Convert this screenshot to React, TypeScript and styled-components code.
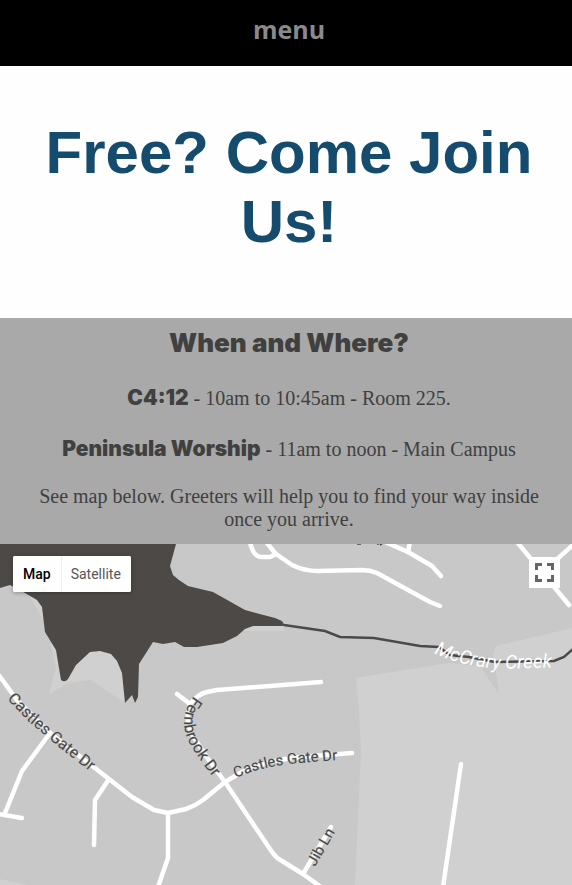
import React from "react";
import styled, { createGlobalStyle } from "styled-components";

const GlobalStyle = createGlobalStyle`
  * { box-sizing: border-box; }
  body { margin: 0; background: #fefefe; }
`;

const Page = styled.main`
  display: flex;
  flex-direction: column;
  text-align: center;
`;

const MenuBar = styled.nav`
  display: flex;
  justify-content: center;
  padding: 11px 0 19px 6px;
  background: #000;
`;

const MenuButton = styled.button`
  border: 0;
  padding: 0;
  background: none;
  color: #8a8a8a;
  font: 700 25px/36px "Open Sans", sans-serif;
  cursor: pointer;
`;

const Hero = styled.header`
  padding: 52px 30px 62px 36px;
  background: #fefefe;
`;

const Title = styled.h1`
  margin: 0;
  color: #154c6e;
  font: bold 60px/69px "Liberation Sans", Arial, sans-serif;
`;

const Info = styled.section`
  display: flex;
  flex-direction: column;
  padding: 8px 24px 13px 30px;
  background: #a9a9a9;
  color: #404040;
  font: 20px/23px "Liberation Serif", "Times New Roman", serif;
`;

const InfoTitle = styled.h2`
  margin: 0 0 24px;
  font: 900 26px/34px "Arial Black", Inter, sans-serif;
`;

const Event = styled.p`
  margin: 0 0 23px;
  line-height: 28px;

  & + & {
    margin-bottom: 22px;
  }
`;

const EventName = styled.strong`
  font: 900 21px/28px "Arial Black", Inter, sans-serif;
`;

const Directions = styled.p`
  margin: 0;
`;

const MapPanel = styled.section`
  position: relative;
  overflow: hidden;
  background: #c8c8c8;
`;

const MapCanvas = styled.svg`
  display: block;
  width: 100%;
  height: auto;
`;

const MapTypes = styled.div`
  position: absolute;
  top: 12px;
  left: 13px;
  display: flex;
  border-radius: 2px;
  overflow: hidden;
  background: #fff;
  box-shadow: 0 1px 4px rgba(0, 0, 0, 0.3);
`;

const MapType = styled.button<{ $active?: boolean }>`
  height: 36px;
  padding: 0 10px;
  border: 0;
  background: #fff;
  color: ${(p) => (p.$active ? "#000" : "#565656")};
  font: ${(p) => (p.$active ? 500 : 400)} 14px/36px Roboto, sans-serif;
  cursor: pointer;

  & + & {
    box-shadow: inset 1px 0 #eee;
  }
`;

const Fullscreen = styled.button`
  position: absolute;
  top: 13px;
  right: 12px;
  display: grid;
  place-items: center;
  width: 31px;
  height: 31px;
  padding: 0;
  border: 0;
  background: #fff;
  cursor: pointer;
`;

const RoadLabel = styled.text<{ $size?: number }>`
  fill: #484848;
  stroke: #c8c8c8;
  stroke-width: 1px;
  paint-order: stroke;
  font: ${(p) => p.$size ?? 15}px Roboto, sans-serif;
`;

const CreekLabel = styled.text`
  fill: #fff;
  font: italic 19px Roboto, sans-serif;
`;

const roads = [
  "M250 -2 L251 2 L253 7 Q256 13 262 13 H270 L276 10",
  "M266 -2 L276 10 L292 21 Q304 27 318 27 L362 26 Q370 26 377 29 L430 58 L440 62",
  "M385 -2 L408 8 L432 22 L441 32",
  "M410 -2 L408 8",
  "M517 -2 L569 61",
  "M574 0 L545 26",
  "M-2 130 L17 156 L50 189 L109 235 L132 253 L154 266 L168 269 L186 265 Q195 262 203 256 L225 238 L242 228 Q260 218 300 213 L352 209",
  "M50 189 L22 227 L5 269",
  "M-2 270 L22 274",
  "M109 235 L95 256 L94 301",
  "M168 269 V314 L158 343",
  "M177 150 L190 160 Q198 150 207 148 L217 146 L321 138",
  "M190 160 Q184 176 193 192 L210 218 L225 238 L272 308 Q276 314 282 317 L303 330 L321 343",
  "M303 330 L331 283",
  "M461 220 L443 343",
];

function MapDrawing() {
  return (
    <MapCanvas viewBox="0 0 572 341" role="img" aria-label="Street map around Castles Gate Dr">
      <rect width="572" height="341" fill="#c8c8c8" />
      <g fill="#d0d0d0">
        <path d="M356 134 L380 130 L449 119 L480 122 L499 150 L495 121 L493 111 L496 102 L572 84 V341 H355 L361 206 L359 166 Z" />
        <path d="M0 335 L27 341 H0 Z" />
        <path d="M50 100 L56 123 L49 150 L68 139 L90 136 L126 159 L119 105 Z" />
        <path d="M24 48 L30 52 L43 76 V55 Z" />
        <path d="M240 87 H284 V80 H245 Z" />
        <path d="M170 24 L174 32 L188 43 V46 L172 40 Z" />
      </g>
      <path
        fill="#4d4946"
        d="M0 0 H176 L170 22 L173 31 L179 36 L188 42 L213 48 L245 66 L275 74 L282 77 L285 82 L253 82 L245 85 L237 92 L223 99 L197 103 H184 L175 98 L163 100 L153 98 L139 120 L138 153 L135 159 L132 151 L125 159 L122 129 L117 117 L111 110 L100 107 L90 108 L76 121 L68 135 Q65 139 61 136 L56 106 L45 88 L42 63 L37 56 L25 49 L10 41 L0 44 Z"
      />
      <path
        fill="none"
        stroke="#4d4946"
        strokeWidth="2.5"
        d="M284 81 L325 87 L340 93 L374 94 L420 102 L439 103 L450 111 L469 113 L495 118 L554 117 L564 113 L573 105"
      />
      <g fill="none" stroke="#fff" strokeWidth="4.5" strokeLinecap="round" strokeLinejoin="round">
        {roads.map((d) => (
          <path key={d} d={d} />
        ))}
      </g>
      <path d="M357 0 h4 M377 0 h2 M380 1 l2 -1" stroke="#484848" strokeWidth="1.5" />
      <defs>
        <path id="castles-west" d="M7 155 L28 177 L60 204 L105 239" />
        <path id="castles-east" d="M236 234 Q262 222 300 219 L350 215" />
        <path id="fernbrook" d="M194 152 Q178 172 188 196 Q196 212 217 238" />
        <path id="jib" d="M315 323 L341 278" />
        <path id="creek" d="M434 109 Q460 122 500 125 L570 123" />
      </defs>
      <RoadLabel $size={16}><textPath href="#castles-west">Castles Gate Dr</textPath></RoadLabel>
      <RoadLabel><textPath href="#castles-east">Castles Gate Dr</textPath></RoadLabel>
      <RoadLabel $size={16}><textPath href="#fernbrook">Fernbrook Dr</textPath></RoadLabel>
      <RoadLabel><textPath href="#jib">Jib Ln</textPath></RoadLabel>
      <CreekLabel><textPath href="#creek">McCrary Creek</textPath></CreekLabel>
    </MapCanvas>
  );
}

export default function App() {
  return (
    <Page>
      <GlobalStyle />
      <MenuBar>
        <MenuButton type="button">menu</MenuButton>
      </MenuBar>
      <Hero>
        <Title>Free? Come Join Us!</Title>
      </Hero>
      <Info>
        <InfoTitle>When and Where?</InfoTitle>
        <Event>
          <EventName>C4:12</EventName> - 10am to 10:45am - Room 225.
        </Event>
        <Event>
          <EventName>Peninsula Worship</EventName> - 11am to noon - Main Campus
        </Event>
        <Directions>
          See map below. Greeters will help you to find your way inside once you arrive.
        </Directions>
      </Info>
      <MapPanel>
        <MapDrawing />
        <MapTypes>
          <MapType type="button" $active>Map</MapType>
          <MapType type="button">Satellite</MapType>
        </MapTypes>
        <Fullscreen type="button" aria-label="Toggle fullscreen view">
          <svg width="19" height="19" viewBox="0 0 19 19" fill="none" stroke="#666" strokeWidth="3">
            <path d="M1.500 7 V1.500 H7 M12 1.500 H17.500 V7 M17.500 12 V17.500 H12 M7 17.500 H1.500 V12" />
          </svg>
        </Fullscreen>
      </MapPanel>
    </Page>
  );
}
